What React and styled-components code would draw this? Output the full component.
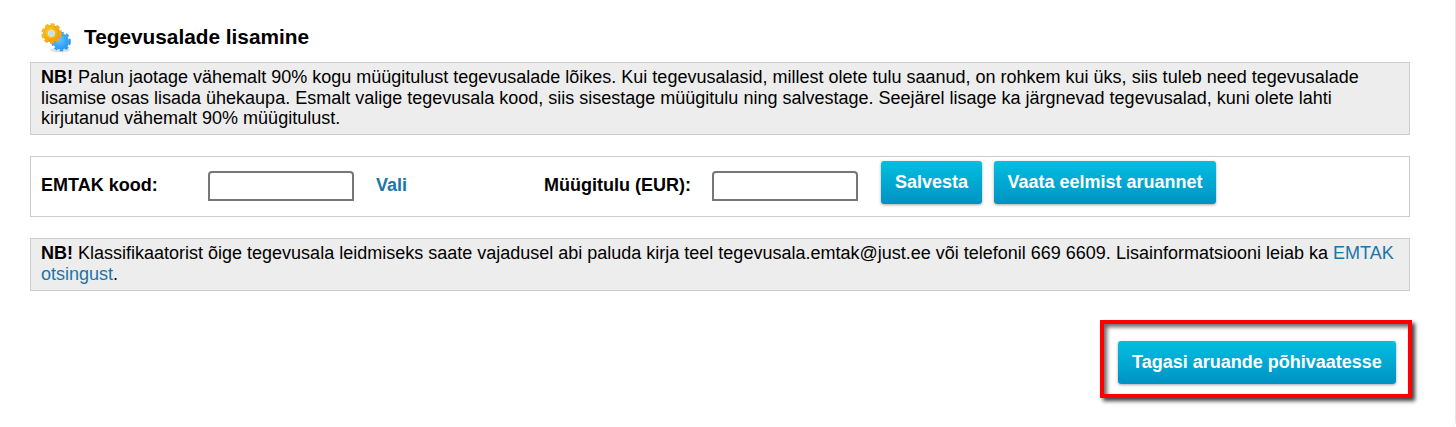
import React from "react";
import styled, { createGlobalStyle } from "styled-components";

const GlobalStyle = createGlobalStyle`
    html, body {
        margin: 0;
        padding: 0;
        background: #ffffff;
    }
    body {
        font-family: "Liberation Sans", Arial, sans-serif;
        font-size: 18px;
        color: #000000;
    }
`;

const Page = styled.div`
    box-sizing: border-box;
    width: 1456px;
    height: 427px;
    padding: 21px 45px 0 30px;
    border-right: 1px solid #e6e6e6;
    border-bottom-right-radius: 6px;
    overflow: hidden;
`;
const Header = styled.div`
    display: flex;
    align-items: center;
    height: 33px;
    margin-bottom: 8px;
    gap: 12px;
    padding-left: 10px;
`;
const Title = styled.h2`
    margin: 0 0 2px;
    font-size: 20.8px;
    font-weight: bold;
    line-height: 32px;
`;
const Notice = styled.div`
    box-sizing: border-box;
    border: 1px solid #cccccc;
    background: #ededed;
    padding: 4px 10px 5px;
    line-height: 20.7px;
`;
const Strong = styled.b`
    font-weight: bold;
`;
const TextLink = styled.a`
    color: #1a75a8;
    text-decoration: none;
`;
const FormRow = styled.div`
    box-sizing: border-box;
    display: flex;
    align-items: center;
    height: 61px;
    margin: 21px 0;
    padding: 0 10px;
    border: 1px solid #cccccc;
`;
const Label = styled.label`
    font-weight: bold;
    width: ${props => props.$width}px;
    margin-bottom: 2px;
`;
const Input = styled.input`
    box-sizing: border-box;
    width: 146px;
    height: 30px;
    margin-bottom: 1px;
    border: 2px solid #767676;
    border-radius: 4px 4px 0 0;
    background: #ffffff;
    outline: none;
`;
const PickLink = styled.a`
    width: 168px;
    margin-left: 22px;
    margin-bottom: 2px;
    color: #1a75a8;
    font-weight: bold;
`;
const Button = styled.button`
    box-sizing: border-box;
    width: ${props => props.$width}px;
    height: 43px;
    padding: 0;
    border: 0;
    border-radius: 3px;
    background: linear-gradient(to bottom, #02bfe0, #0092c4);
    box-shadow: 0 1px 3px rgba(0, 0, 0, 0.35);
    color: #ffffff;
    font-family: "Liberation Sans", Arial, sans-serif;
    font-size: 18px;
    font-weight: bold;
    white-space: nowrap;
`;
const RowButton = styled(Button)`
    margin-left: ${props => props.$left}px;
    margin-bottom: 8px;
`;
const Footer = styled.div`
    display: flex;
    justify-content: flex-end;
    margin: 29.5px -2px 0 0;
`;
const Highlight = styled.div`
    display: flex;
    box-sizing: border-box;
    width: 312px;
    height: 78px;
    padding: 17px 0 0 14px;
    border: 4px solid #ff0000;
    box-shadow: 3px 3px 4px rgba(0, 0, 0, 0.75), inset 3px 3px 4px rgba(0, 0, 0, 0.6);
`;

const GearsIcon = () => (
    <svg width="32" height="30" viewBox="0 0 32 30">
        <defs>
            <radialGradient id="orange" cx="40%" cy="40%" r="70%">
                <stop offset="0%" stopColor="#ffd84f" />
                <stop offset="100%" stopColor="#f2a100" />
            </radialGradient>
            <radialGradient id="blue" cx="40%" cy="40%" r="70%">
                <stop offset="0%" stopColor="#62c8ff" />
                <stop offset="100%" stopColor="#1f8ff0" />
            </radialGradient>
            <filter id="soft">
                <feGaussianBlur stdDeviation="0.5" />
            </filter>
        </defs>
        <g filter="url(#soft)">
            <ellipse cx="20" cy="27" rx="10" ry="2.5" fill="#000000" opacity="0.12" />
            <circle cx="21" cy="18.5" r="8" fill="url(#blue)" />
            <circle cx="21" cy="18.5" r="8.8" fill="none" stroke="url(#blue)" strokeWidth="2" strokeDasharray="3.4 2.4" />
            <circle cx="11.5" cy="10.5" r="6" fill="none" stroke="url(#orange)" strokeWidth="5.5" />
            <circle cx="11.5" cy="10.5" r="9" fill="none" stroke="url(#orange)" strokeWidth="2.5" strokeDasharray="3.8 2.1" />
            <circle cx="11.5" cy="10.5" r="3" fill="#bfe6e6" />
        </g>
    </svg>
);

const App = () => {
    return (
        <Page>
            <GlobalStyle />
            <Header>
                <GearsIcon />
                <Title>Tegevusalade lisamine</Title>
            </Header>
            <Notice>
                <Strong>NB!</Strong> Palun jaotage vähemalt 90% kogu müügitulust tegevusalade lõikes. Kui tegevusalasid, millest olete tulu saanud, on rohkem kui üks, siis tuleb need tegevusalade lisamise osas lisada ühekaupa. Esmalt valige tegevusala kood, siis sisestage müügitulu ning salvestage. Seejärel lisage ka järgnevad tegevusalad, kuni olete lahti kirjutanud vähemalt 90% müügitulust.
            </Notice>
            <FormRow>
                <Label $width={167}>EMTAK kood:</Label>
                <Input />
                <PickLink>Vali</PickLink>
                <Label $width={168}>Müügitulu (EUR):</Label>
                <Input />
                <RowButton $left={23} $width={101}>Salvesta</RowButton>
                <RowButton $left={12} $width={222}>Vaata eelmist aruannet</RowButton>
            </FormRow>
            <Notice>
                <Strong>NB!</Strong> Klassifikaatorist õige tegevusala leidmiseks saate vajadusel abi paluda kirja teel tegevusala.emtak@just.ee või telefonil 669 6609. Lisainformatsiooni leiab ka <TextLink>EMTAK otsingust</TextLink>.
            </Notice>
            <Footer>
                <Highlight>
                    <Button $width={278}>Tagasi aruande põhivaatesse</Button>
                </Highlight>
            </Footer>
        </Page>
    );
};

export default App;
